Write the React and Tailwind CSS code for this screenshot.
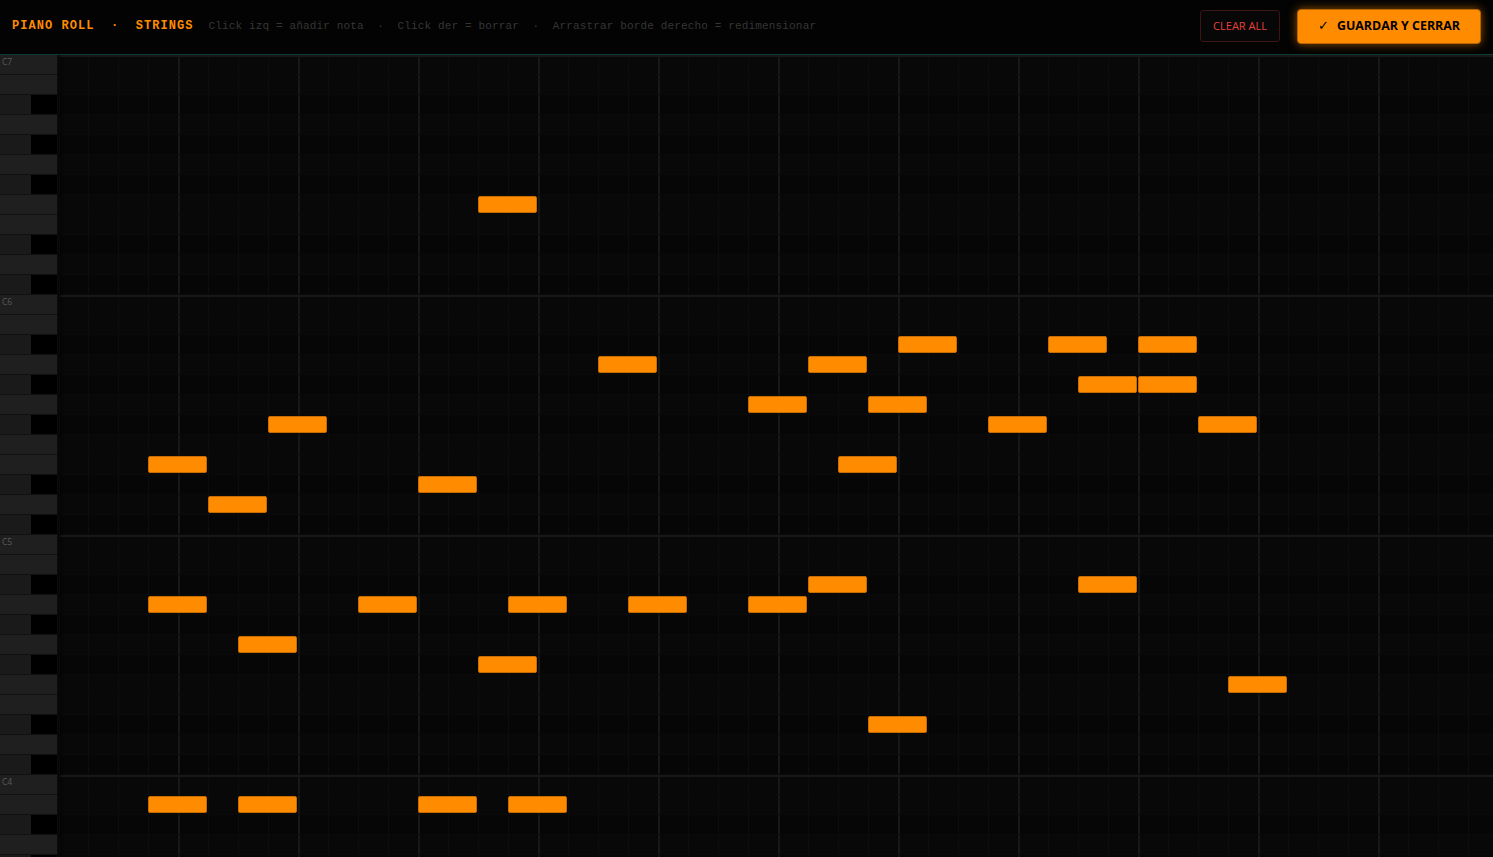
import React from "react";

const NAMES = ["C", "C#", "D", "D#", "E", "F", "F#", "G", "G#", "A", "A#", "B"];
const BLACK = [1, 3, 6, 8, 10];
const TOP_PITCH = 96; // C7
const ROWS = 48;

// [row, beat, length in beats]
const NOTES = [
  [7, 14, 2],
  [14, 28, 2], [14, 33, 2], [14, 36, 2],
  [15, 18, 2], [15, 25, 2],
  [16, 34, 2], [16, 36, 2],
  [17, 23, 2], [17, 27, 2],
  [18, 7, 2], [18, 31, 2], [18, 38, 2],
  [20, 3, 2], [20, 26, 2],
  [21, 12, 2],
  [22, 5, 2],
  [26, 25, 2], [26, 34, 2],
  [27, 3, 2], [27, 10, 2], [27, 15, 2], [27, 19, 2], [27, 23, 2],
  [29, 6, 2],
  [30, 14, 2],
  [31, 39, 2],
  [33, 27, 2],
  [37, 3, 2], [37, 6, 2], [37, 12, 2], [37, 15, 2],
];

const rows = Array.from({ length: ROWS }, (_, r) => {
  const pitch = TOP_PITCH - r;
  const pc = pitch % 12;
  return {
    pitch,
    isBlack: BLACK.includes(pc),
    isC: pc === 0,
    name: NAMES[pc] + (Math.floor(pitch / 12) - 1),
  };
});

const Key = ({ row }) => {
  if (row.isBlack) {
    return (
      <div className="flex h-[20px] border-b border-[#111]">
        <div className="w-[31px] bg-[#1a1a1a]" />
        <div className="flex-1 bg-black" />
      </div>
    );
  }
  return (
    <div className="h-[20px] bg-[#1f1f1f] border-b border-[#111] pl-[2px]">
      {row.isC && (
        <span className="block text-[8.5px] leading-[13px] text-[#5a5a5a] font-['Open_Sans',sans-serif]">
          {row.name}
        </span>
      )}
    </div>
  );
};

const GridRow = ({ row }) => (
  <div
    className={
      "h-[20px] border-b border-[#0a0a0a] bg-[repeating-linear-gradient(90deg,#181818_0_2px,transparent_2px_120px),repeating-linear-gradient(90deg,#0d0d0d_0_1px,transparent_1px_30px)] " +
      (row.isBlack ? "bg-[#060606] " : "bg-[#080808] ") +
      (row.isC ? "shadow-[inset_0_2px_0_#181818]" : "")
    }
  />
);

export default function App() {
  return (
    <div className="h-screen w-full bg-black flex flex-col overflow-hidden">
      {/* Header */}
      <header className="h-[55px] shrink-0 flex items-center pl-3 pr-3 pb-[2px] bg-[#030303] border-b border-[#0d3a33]">
        <span className="whitespace-pre font-['Liberation_Mono',monospace] font-bold text-[12px] tracking-[1.05px] text-[#ff8c00]">
          {"PIANO ROLL  ·  STRINGS"}
        </span>
        <span className="ml-[15px] whitespace-pre font-['Liberation_Mono',monospace] text-[11px] tracking-[0.15px] text-[#363636]">
          {"Click izq = añadir nota  ·  Click der = borrar  ·  Arrastrar borde derecho = redimensionar"}
        </span>
        <div className="ml-auto flex items-center gap-[17px]">
          <button className="h-[32px] px-[12px] rounded-[3px] border border-[#3d1515] bg-[#070707] text-[11px] text-[#e5413b] font-['Open_Sans',sans-serif] uppercase">
            Clear All
          </button>
          <button className="h-[35px] px-[20px] flex items-center gap-[8px] rounded-[4px] border border-[#b86400] bg-[#ff8c00] shadow-[0_0_10px_rgba(255,140,0,0.55)] text-black text-[12.4px] font-bold font-['Open_Sans',sans-serif]">
            <span className="font-normal text-[13px]">✓</span>
            <span>GUARDAR Y CERRAR</span>
          </button>
        </div>
      </header>

      {/* Roll */}
      <div className="flex-1 overflow-hidden">
        <div className="flex">
          <div className="w-[58px] shrink-0 flex flex-col border-r border-[#0c0c0c] shadow-[2px_0_3px_rgba(0,0,0,0.9)] z-10">
            {rows.map((row) => (
              <Key key={row.pitch} row={row} />
            ))}
          </div>
          <div className="relative flex-1 min-w-0 overflow-hidden">
            {rows.map((row) => (
              <GridRow key={row.pitch} row={row} />
            ))}
            {NOTES.map(([r, beat, len], i) => (
              <div
                key={i}
                className="absolute h-[17px] rounded-[2px] bg-[#ff8c00] border border-[#c96c00]"
                style={{ top: r * 20 + 1, left: beat * 30, width: len * 30 - 1 }}
              />
            ))}
          </div>
        </div>
      </div>
    </div>
  );
}
